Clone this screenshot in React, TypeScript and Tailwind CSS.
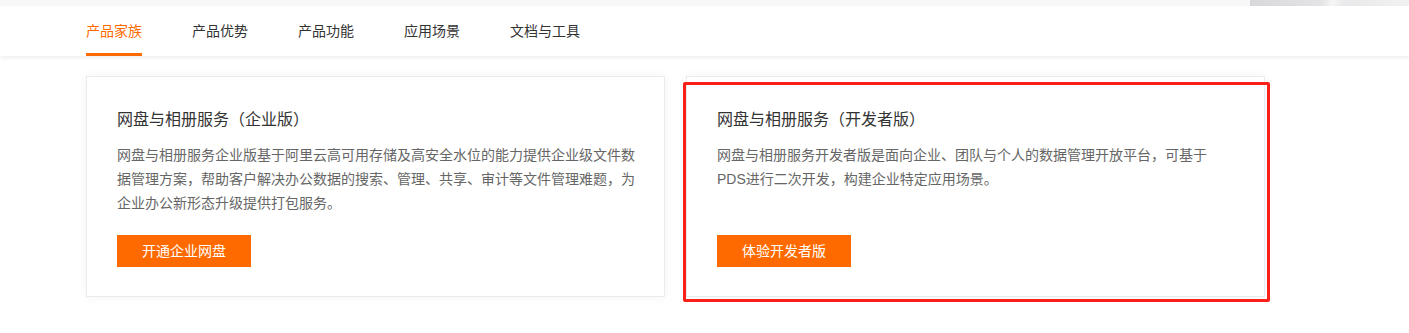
const tabs = ["产品家族", "产品优势", "产品功能", "应用场景", "文档与工具"]

type CardProps = {
  title: string
  children: React.ReactNode
  action: string
  highlighted?: boolean
}

function ProductCard({ title, children, action, highlighted }: CardProps) {
  return (
    <div className="relative flex w-[579px] flex-col border border-[#ebebeb] bg-white pt-[30px] pr-[28px] pb-[29px] pl-[30px] shadow-[0_0_10px_rgba(0,0,0,0.05)]">
      <h3 className="text-[16px] leading-[26px] text-[#333]">{title}</h3>
      <p className="mt-[10px] flex-1 text-[14px] leading-6 text-[#666]">{children}</p>
      <button
        type="button"
        className="mt-5 h-8 w-[134px] bg-[#ff6a00] text-[14px] text-white"
      >
        {action}
      </button>
      {highlighted && (
        <div className="pointer-events-none absolute top-[5px] -left-[4px] h-[220px] w-[587px] rounded-[2px] border-[3px] border-[#fb1f1a]" />
      )}
    </div>
  )
}

export default function App() {
  return (
    <div className="min-h-screen bg-white font-['Liberation_Sans','Noto_Sans_CJK_SC',sans-serif]">
      <div className="flex h-[6px] justify-end bg-[#f7f7f7]">
        <div className="h-full w-[159px] bg-[linear-gradient(100deg,#d8d8da_0%,#e4e4e6_45%,#f6f6f6_52%,#e9e9eb_60%,#f2f2f2_100%)]" />
      </div>

      <nav className="relative z-10 h-[50px] bg-white shadow-[0_2px_4px_rgba(0,0,0,0.07)]">
        <ul className="flex h-full gap-[50px] pl-[86px]">
          {tabs.map((tab, i) => (
            <li
              key={tab}
              className={
                i === 0
                  ? "relative flex items-center pt-px text-[14px] text-[#ff6a00]"
                  : "relative flex items-center pt-px text-[14px] text-[#333]"
              }
            >
              {tab}
              {i === 0 && <span className="absolute bottom-0 left-0 h-[3px] w-full bg-[#ff6a00]" />}
            </li>
          ))}
        </ul>
      </nav>

      <section className="flex gap-[21px] pt-5 pl-[86px]">
        <ProductCard title="网盘与相册服务（企业版）" action="开通企业网盘">
          网盘与相册服务企业版基于阿里云高可用存储及高安全水位的能力提供企业级文件数据管理方案，帮助客户解决办公数据的搜索、管理、共享、审计等文件管理难题，为企业办公新形态升级提供打包服务。
        </ProductCard>
        <ProductCard title="网盘与相册服务（开发者版）" action="体验开发者版" highlighted>
          网盘与相册服务开发者版是面向企业、团队与个人的数据管理开放平台，可基于
          <br />
          PDS进行二次开发，构建企业特定应用场景。
        </ProductCard>
      </section>
    </div>
  )
}
